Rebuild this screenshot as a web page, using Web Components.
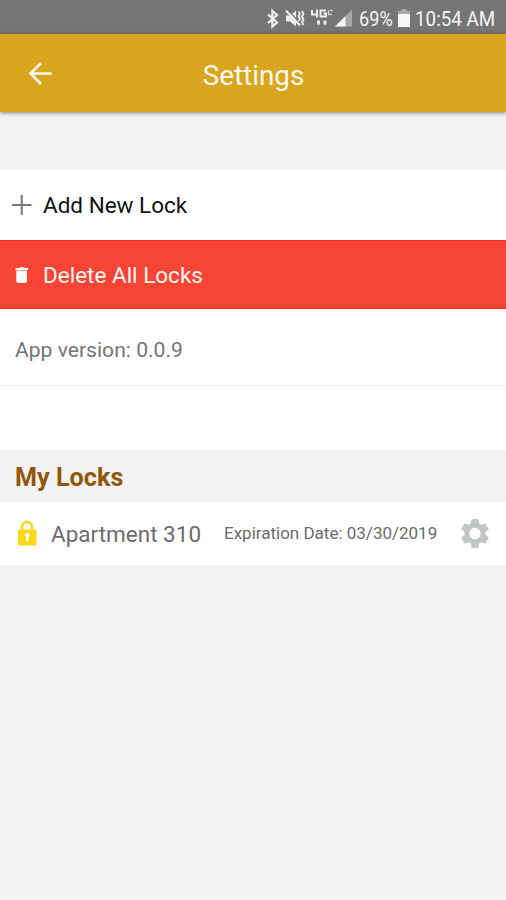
<!DOCTYPE html>
<html lang="en">
<head>
<meta charset="utf-8">
<title>Settings</title>
<style>
  body {
    margin: 0;
    background: #f3f3f3;
    font-family: Roboto, "Liberation Sans", sans-serif;
  }
</style>
</head>
<body>
<settings-page></settings-page>

<script>
(function() {
  function define(name, html) {
    const template = document.createElement('template');
    template.innerHTML = html;

    customElements.define(name, class extends HTMLElement {
      constructor() {
        super();

        this.attachShadow({ mode: 'open' });
        this.shadowRoot.appendChild(template.content.cloneNode(true));
      }
    });
  }

  define('status-bar', `
    <style>
    :host {
        display: flex;
        align-items: center;
        justify-content: flex-end;
        height: 34px;
        padding: 4px 11px 0 0;
        box-sizing: border-box;
        background: #757575;
        color: #f5f5f5;
        font-size: 19.5px;
        line-height: 30px;
        white-space: nowrap;
    }

    svg {
        display: block;
        flex: none;
    }

    .battery {
        margin: 0 0 2px 5px;
    }

    .level {
        width: 34px;
        margin-left: 6px;
        padding-top: 2px;
    }

    .time {
        width: 80px;
        margin-left: 5px;
        padding-top: 2px;
    }

    span span {
        display: inline-block;
        transform-origin: left center;
    }

    .level span {
        transform: scaleX(.93);
    }

    .time span {
        transform: scaleX(.965);
    }
    </style>
    <svg width="87" height="22" viewBox="266 8 87 22" fill="none" stroke="#eee">
      <path d="M268 14.500l9 8-4.600 4V11l4.600 4-9 8" stroke-width="2.300"/>
      <path d="M286 15.500h4l6-5v16l-6-5h-4z" fill="#eee" stroke="none"/>
      <path d="M288 10l14 15" stroke="#757575" stroke-width="1.200"/>
      <path d="M286 10.500l14 15" stroke-width="2"/>
      <path d="M298.500 11.500l1.500 2.500-1.500 2 1.500 3-1.500 2M302 11l1.500 3-1.500 2.500 1.500 3-1.500 2.500 1.500 3" stroke-width="1.800"/>
      <path d="M312 10v4.500h6M317 9.500v8M326 10.500h-5.500v6h5.500v-3h-2.500" stroke-width="2"/>
      <path d="M328.500 10v5M328 14.500h4M330 10.500h3" stroke="#ccc" stroke-width="1.500"/>
      <path d="M317 20.500h3v3l-1.500 2-1.500-2zM323.500 20.500h3v3l-1.500 2-1.500-2z" fill="#eee" stroke="none"/>
      <path d="M335 26.500L352 9.500v17z" fill="#a9a9a9" stroke="none"/>
      <path d="M335 26.500L345.500 16v10.500z" fill="#f5f5f5" stroke="none"/>
    </svg>
    <span class="level"><span>69%</span></span>
    <svg class="battery" width="12" height="18" viewBox="0 0 12 18">
      <path d="M3.500 0h5v2H12v4H0V2h3.500z" fill="#a9a9a9"/>
      <path d="M0 5h12v13H0z" fill="#f8f8f8"/>
    </svg>
    <span class="time"><span>10:54 AM</span></span>
  `);

  define('app-bar', `
    <style>
    :host {
        display: grid;
        grid-template-columns: 80px 1fr 80px;
        align-items: center;
        position: relative;
        height: 78px;
        background: #d9a41e;
        box-shadow: 0 1px 4px rgba(0, 0, 0, 0.45);
        color: #fffaf0;
        font-size: 27.800px;
        text-align: center;
    }

    svg {
        display: block;
        margin-left: 28px;
    }

    div {
        line-height: 32px;
        padding: 5px 0 0 1px;
    }
    </style>
    <svg width="24" height="24" viewBox="0 0 24 24" fill="none" stroke="#fffaf0" stroke-width="2.700">
      <path d="M23.500 12.500H3M13 2L2.500 12.500 13 23"/>
    </svg>
    <div><span><slot></slot></span></div>
  `);

  define('settings-item', `
    <style>
    :host {
        display: flex;
        align-items: center;
        height: var(--item-height, 70px);
        box-sizing: border-box;
        background: var(--item-background, #fff);
        color: var(--item-color, #111);
        font-size: 22.500px;
        white-space: nowrap;
    }

    .icon {
        flex: none;
        width: 43px;
    }
    </style>
    <div class="icon"><slot name="icon"></slot></div>
    <span><slot></slot></span>
  `);

  define('section-header', `
    <style>
    :host {
        display: flex;
        align-items: center;
        height: 52px;
        padding: 2px 0 0 15px;
        box-sizing: border-box;
        background: #f3f3f3;
        color: #945608;
        font-size: 25.200px;
        font-weight: 700;
    }
    </style>
    <span><slot></slot></span>
  `);

  define('lock-row', `
    <style>
    :host {
        display: flex;
        align-items: center;
        height: 63px;
        background: #fff;
        color: #6c6c6c;
        white-space: nowrap;
    }

    svg {
        display: block;
        flex: none;
    }

    .lock {
        width: 20px;
        margin: 0 14px 2px 17px;
    }

    .name {
        width: 173px;
        font-size: 22.500px;
    }

    .date {
        flex: 1;
        padding-bottom: 1px;
        font-size: 17px;
    }

    .gear {
        margin-right: 17px;
    }
    </style>
    <svg class="lock" width="20" height="26" viewBox="0 0 20 26">
      <path d="M5 10V7a5 5 0 0 1 10 0v3" fill="none" stroke="#fdd816" stroke-width="2.600"/>
      <rect x="1" y="9.500" width="18.500" height="16" rx="1.500" fill="#fdd816"/>
      <path d="M8 15.500a2.300 2.300 0 1 1 3.500 1.500v4.500H9V17z" fill="#fff"/>
    </svg>
    <span class="name"><slot name="name"></slot></span>
    <span class="date"><slot name="date"></slot></span>
    <svg class="gear" width="28" height="29" viewBox="2 2 20 20" preserveAspectRatio="none">
      <path fill="#c2c5c5" d="M19.430 12.980c.04-.32.07-.64.07-.98s-.03-.66-.07-.98l2.110-1.650c.19-.15.24-.42.12-.64l-2-3.460c-.12-.22-.39-.3-.61-.22l-2.490 1c-.52-.4-1.080-.73-1.690-.98l-.38-2.650C14.460 2.180 14.250 2 14 2h-4c-.25 0-.46.18-.49.42l-.38 2.650c-.61.25-1.170.59-1.690.98l-2.490-1c-.23-.09-.49 0-.61.22l-2 3.460c-.13.22-.07.49.12.64l2.110 1.650c-.04.32-.07.65-.07.98s.03.66.07.98l-2.110 1.650c-.19.15-.24.42-.12.64l2 3.460c.12.22.39.3.61.22l2.490-1c.52.4 1.080.73 1.690.98l.38 2.650c.03.24.24.42.49.42h4c.25 0 .46-.18.49-.42l.38-2.650c.61-.25 1.170-.59 1.690-.98l2.490 1c.23.09.49 0 .61-.22l2-3.460c.12-.22.07-.49-.12-.64l-2.110-1.650zM12 16c-2.210 0-4-1.790-4-4s1.790-4 4-4 4 1.790 4 4-1.790 4-4 4z"/>
    </svg>
  `);

  define('settings-page', `
    <style>
    :host {
        display: flex;
        flex-direction: column;
        width: 506px;
        height: 900px;
        overflow: hidden;
        background: #f3f3f3;
    }

    main {
        padding-top: 58px;
    }

    svg {
        display: block;
    }

    .delete {
        --item-height: 69px;
        --item-background: #f64435;
        --item-color: #fff5f2;
        box-shadow: inset 0 1px #ee3225, inset 0 -1px #ee3225;
    }

    .version {
        display: flex;
        align-items: center;
        height: 77px;
        padding: 4px 0 0 15px;
        box-sizing: border-box;
        border-bottom: 1px solid #f0f0f0;
        background: #fff;
        color: #757575;
        font-size: 21.100px;
    }

    .gap {
        height: 64px;
        background: #fff;
    }
    </style>
    <status-bar></status-bar>
    <app-bar>Settings</app-bar>
    <main>
      <settings-item>
        <svg slot="icon" width="43" height="20" viewBox="0 0 43 20" fill="none" stroke="#777" stroke-width="2">
          <path d="M12 10h19.500M21.700 0v20"/>
        </svg>
        Add New Lock
      </settings-item>
      <settings-item class="delete">
        <svg slot="icon" width="43" height="16" viewBox="0 0 43 16" fill="#fff">
          <path d="M15.500 1h4l1-1h3l1 1h3.500v2h-12.500zM16.300 3.500h10.700v10.500q0 2-2 2h-6.700q-2 0-2-2z"/>
        </svg>
        Delete All Locks
      </settings-item>
      <div class="version"><span>App version: 0.0.9</span></div>
      <div class="gap"></div>
      <section-header>My Locks</section-header>
      <lock-row>
        <span slot="name">Apartment 310</span>
        <span slot="date">Expiration Date: 03/30/2019</span>
      </lock-row>
    </main>
  `);
})();
</script>
</body>
</html>
